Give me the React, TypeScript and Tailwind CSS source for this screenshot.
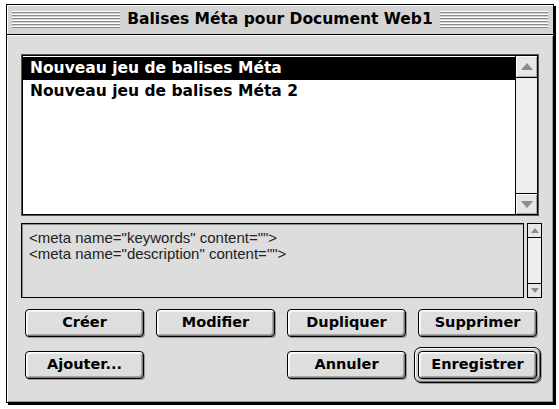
import React from 'react'

const stripes =
  'h-[17px] flex-1 bg-[repeating-linear-gradient(180deg,#ffffff_0px,#ffffff_1px,#8a8a8a_1px,#8a8a8a_2px,#d4d4d4_2px,#d4d4d4_3px)]'

function Btn({ label }: { label: string }) {
  return (
    <div className="flex h-[28px] w-[119px] items-center justify-center rounded-[4px] border border-black bg-[#dedede] text-[14.5px] font-bold text-black shadow-[inset_1px_1px_0_#ffffff,inset_2px_2px_0_#f2f2f2,inset_-1px_-1px_0_#7a7a7a,inset_-2px_-2px_0_#a8a8a8,1px_1px_0_#9a9a9a]">
      {label}
    </div>
  )
}

function DefaultBtn({ label }: { label: string }) {
  return (
    <div className="rounded-[7px] border border-black bg-[#cfcfcf] p-[3px] shadow-[inset_1px_1px_0_#ffffff,inset_-1px_-1px_0_#707070,1px_1px_0_#9a9a9a]">
      <Btn label={label} />
    </div>
  )
}

function Arrow({ up, small }: { up?: boolean; small?: boolean }) {
  const w = small ? 8 : 12
  const h = small ? 5 : 7
  return (
    <svg width={w} height={h} viewBox={`0 0 ${w} ${h}`}>
      <polygon
        points={up ? `0,${h} ${w / 2},0 ${w},${h}` : `0,0 ${w / 2},${h} ${w},0`}
        fill="#8c8c8c"
      />
    </svg>
  )
}

export default function App() {
  return (
    <div
      className="h-[409px] w-[559px] overflow-hidden bg-white pl-[6px] pt-[4px]"
      style={{ fontFamily: '"DejaVu Sans", "Noto Sans", sans-serif' }}
    >
      <div className="flex h-[399px] w-[548px] flex-col border border-black shadow-[2px_2px_0_#000]">
        {/* barre de titre */}
        <div className="flex h-[30px] shrink-0 items-center border-b border-black bg-[#d4d4d4] px-[5px] shadow-[inset_1px_1px_0_#ffffff]">
          <div className={stripes} />
          <div className="px-[7px] text-[15.5px] font-bold leading-none text-black">
            Balises Méta pour Document Web1
          </div>
          <div className={stripes} />
        </div>

        {/* contenu */}
        <div className="flex flex-1 flex-col bg-[#dddddd] pl-[14px] pt-[19px] shadow-[inset_1px_1px_0_#ffffff,inset_-1px_-1px_0_#9a9a9a]">
          {/* liste */}
          <div className="flex h-[162px] w-[518px] border border-[#555] shadow-[inset_1px_1px_0_#000]">
            <div className="flex flex-1 flex-col border border-black bg-white pt-[1px] text-[15.5px] font-bold">
              <div className="flex h-[23px] items-center bg-black pl-[7px] text-white">
                Nouveau jeu de balises Méta
              </div>
              <div className="flex h-[23px] items-center pl-[7px] text-black">
                Nouveau jeu de balises Méta 2
              </div>
            </div>
            <div className="flex w-[22px] flex-col border-y border-r border-black bg-[#eeeeee]">
              <div className="flex h-[22px] items-center justify-center border-b border-black bg-[#e6e6e6] shadow-[inset_1px_1px_0_#fff,inset_-1px_-1px_0_#aaa]">
                <Arrow up />
              </div>
              <div className="flex-1" />
              <div className="flex h-[21px] items-center justify-center border-t border-black bg-[#e6e6e6] shadow-[inset_1px_1px_0_#fff,inset_-1px_-1px_0_#aaa]">
                <Arrow />
              </div>
            </div>
          </div>

          {/* code */}
          <div className="mt-[7px] flex gap-[3px]">
            <div
              className="h-[75px] w-[503px] border border-black bg-[#dddddd] px-[7px] pt-[6px] text-[15px] leading-[16px] text-[#222] shadow-[inset_1px_1px_0_#888]"
              style={{ fontFamily: '"Liberation Sans", Arial, sans-serif' }}
            >
              <div>{'<meta name="keywords" content="">'}</div>
              <div>{'<meta name="description" content="">'}</div>
            </div>
            <div className="flex h-[75px] w-[15px] flex-col border border-black bg-[#eeeeee]">
              <div className="flex h-[14px] items-center justify-center border-b border-black bg-[#e6e6e6]">
                <Arrow up small />
              </div>
              <div className="flex-1" />
              <div className="flex h-[14px] items-center justify-center border-t border-black bg-[#e6e6e6]">
                <Arrow small />
              </div>
            </div>
          </div>

          {/* boutons */}
          <div className="mt-[11px] grid w-[512px] grid-cols-[119px_119px_119px_119px] gap-x-[12px] pl-[4px]">
            <Btn label="Créer" />
            <Btn label="Modifier" />
            <Btn label="Dupliquer" />
            <Btn label="Supprimer" />
          </div>
          <div className="mt-[10px] flex items-center pl-[4px]">
            <Btn label="Ajouter..." />
            <div className="w-[143px]" />
            <Btn label="Annuler" />
            <div className="ml-[8px]">
              <DefaultBtn label="Enregistrer" />
            </div>
          </div>
        </div>
      </div>
    </div>
  )
}
